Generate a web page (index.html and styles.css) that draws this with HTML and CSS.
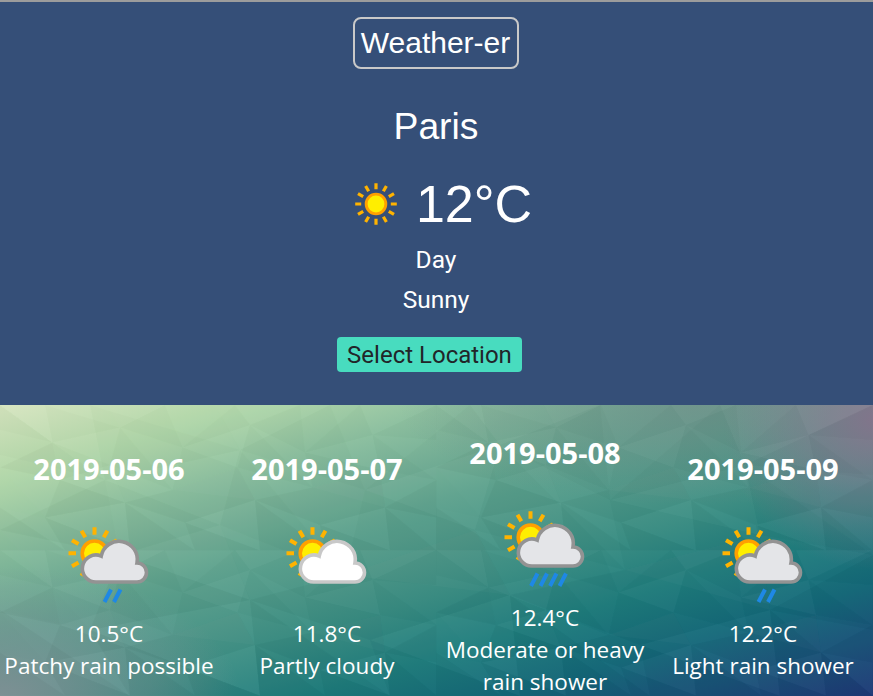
FILE: index.html
```html
<!DOCTYPE html>
<html lang="en">
<head>
<meta charset="utf-8">
<title>Weather-er</title>
<link rel="stylesheet" href="styles.css">
</head>
<body>
<svg class="defs" width="0" height="0" aria-hidden="true">
  <defs>
    <g id="sunrays">
      <path d="M0 -18.5V-26M0 18.5V26M-18.5 0H-26M18.5 0H26M-9.2 -16L-13 -22.5M9.2 -16L13 -22.5M-16 -9.2L-22.5 -13M16 -9.2L22.5 -13M-16 9.2L-22.5 13M16 9.2L22.5 13M-9.2 16L-13 22.500M9.2 16L13 22.500" class="ray"/>
      <circle r="12.3" class="sun-core"/>
    </g>
    <path id="cloud" d="M35 65H76A9.500 9.500 0 0 0 76 46A18.200 18.200 0 0 0 40.200 39.100A13.500 13.500 0 1 0 35 65Z"/>
  </defs>
</svg>
<main class="app">
  <header class="current">
    <h1 class="brand">Weather-er</h1>
    <h2 class="city">Paris</h2>
    <div class="now">
      <svg class="now-icon" viewBox="-40 -40 80 80"><use href="#sunrays"/></svg>
      <span class="now-temp">12°C</span>
    </div>
    <p class="line">Day</p>
    <p class="line">Sunny</p>
    <button class="select">Select Location</button>
  </header>
  <section class="forecast">
    <svg class="mesh" viewBox="0 0 873 291" preserveAspectRatio="none" aria-hidden="true">
      <g id="facets">
        <path class="l2" d="M0 0L90 0L105 75Z M215 0L330 0L240 45Z M470 0L600 0L500 40Z M720 0L873 0L745 60Z M105 75L240 45L220 120Z M365 85L500 40L475 125Z M610 95L745 60L760 130Z M120 150L220 120L250 195Z M345 170L475 125L510 190Z M625 165L760 130L770 205Z M90 225L250 195L260 291Z M370 235L510 190L520 291Z M640 240L770 205L780 291Z"/>
        <path class="l1" d="M90 0L215 0L240 45Z M330 0L470 0L365 85Z M600 0L720 0L610 95Z M0 50L105 75L0 125Z M240 45L365 85L345 170Z M500 40L610 95L625 165Z M745 60L873 70L873 150Z M0 125L120 150L90 225Z M220 120L345 170L250 195Z M475 125L625 165L510 190Z M760 130L873 150L770 205Z M0 205L90 225L130 291Z M250 195L370 235L390 291Z M510 190L640 240L650 291Z M770 205L873 225L873 291Z"/>
        <path class="d1" d="M0 0L105 75L0 50Z M90 0L240 45L105 75Z M330 0L365 85L240 45Z M470 0L500 40L365 85Z M600 0L610 95L500 40Z M720 0L745 60L610 95Z M873 0L873 70L745 60Z M105 75L220 120L120 150Z M240 45L345 170L220 120Z M365 85L475 125L345 170Z M500 40L625 165L475 125Z M610 95L760 130L625 165Z M745 60L873 150L760 130Z"/>
        <path class="d2" d="M0 125L120 150L105 75Z M120 150L90 225L250 195Z M345 170L370 235L250 195Z M475 125L510 190L345 170Z M625 165L640 240L510 190Z M760 130L770 205L625 165Z M873 150L873 225L770 205Z M0 205L130 291L0 291Z M90 225L260 291L130 291Z M250 195L390 291L260 291Z M370 235L520 291L390 291Z M510 190L650 291L520 291Z M640 240L780 291L650 291Z M770 205L873 291L780 291Z M345 170L510 190L370 235Z M625 165L770 205L640 240Z"/>
      </g>
      <use href="#facets" transform="scale(.5)"/>
      <use href="#facets" transform="translate(436 0) scale(.5)"/>
      <use href="#facets" transform="translate(0 145) scale(.5)"/>
      <use href="#facets" transform="translate(436 145) scale(.5)"/>
    </svg>
    <div class="days">
      <article class="day">
        <h3 class="date">2019-05-06</h3>
        <svg class="day-icon" viewBox="0 0 96 96">
          <use href="#sunrays" x="33.500" y="36.300"/>
          <use href="#cloud" class="cloud-grey"/>
          <path class="rain" d="M43.500 85L50 72.500M53 85L59.500 72.500"/>
        </svg>
        <p class="text">10.5°C</p>
        <p class="text">Patchy rain possible</p>
      </article>
      <article class="day">
        <h3 class="date">2019-05-07</h3>
        <svg class="day-icon" viewBox="0 0 96 96">
          <use href="#sunrays" x="33.500" y="36.300"/>
          <use href="#cloud" class="cloud-white"/>
        </svg>
        <p class="text">11.8°C</p>
        <p class="text">Partly cloudy</p>
      </article>
      <article class="day">
        <h3 class="date">2019-05-08</h3>
        <svg class="day-icon" viewBox="0 0 96 96">
          <use href="#sunrays" x="33.500" y="36.300"/>
          <use href="#cloud" class="cloud-grey"/>
          <path class="rain" d="M34 85L40.500 72.500M43.500 85L50 72.500M53 85L59.500 72.500M62.500 85L69 72.500"/>
        </svg>
        <p class="text">12.4°C</p>
        <p class="text">Moderate or heavy rain shower</p>
      </article>
      <article class="day">
        <h3 class="date">2019-05-09</h3>
        <svg class="day-icon" viewBox="0 0 96 96">
          <use href="#sunrays" x="33.500" y="36.300"/>
          <use href="#cloud" class="cloud-grey"/>
          <path class="rain" d="M43.500 85L50 72.500M53 85L59.500 72.500"/>
        </svg>
        <p class="text">12.2°C</p>
        <p class="text">Light rain shower</p>
      </article>
    </div>
  </section>
</main>
</body>
</html>
```

FILE: styles.css
```css
* { box-sizing: border-box; }
html, body { margin: 0; padding: 0; height: 100%; overflow: hidden; }
.defs { position: absolute; }
.ray { stroke: #ffb300; stroke-width: 4; fill: none; }
.sun-core { fill: #ffee00; stroke: #ffa000; stroke-width: 3.6; }
.cloud-grey { fill: #e4e5e8; stroke: #939393; stroke-width: 3.6; }
.cloud-white { fill: #ffffff; stroke: #c8c8c8; stroke-width: 3.6; }
.rain { stroke: #1e88e5; stroke-width: 4; fill: none; }

.app { width: 873px; height: 696px; overflow: hidden; color: #fff; }

.current {
  height: 405px;
  background: #354f78;
  border-top: 2px solid #9c9c9c;
  display: flex;
  flex-direction: column;
  align-items: center;
  font-family: "Liberation Sans", Arial, sans-serif;
  padding: 15px 1px 0 0;
}
.brand {
  margin: 0;
  font-size: 30px;
  font-weight: 400;
  line-height: 48px;
  padding: 0 7px 0 6px;
  border: 2px solid #c9c9c9;
  border-radius: 8px;
  height: 52px;
}
.city {
  margin: 31px 0 0;
  font-size: 37.300px;
  font-weight: 400;
  line-height: 52px;
}
.now {
  margin: 20px 0 0 4px;
  display: flex;
  align-items: center;
  gap: 8px;
  height: 64px;
}
.now-icon { width: 64px; height: 64px; }
.now-temp { font-size: 52px; line-height: 64px; }
.line {
  margin: 8px 0 0;
  font-family: Roboto, sans-serif;
  font-size: 24.500px;
  line-height: 32px;
}
.select {
  margin: 21px 13px 0 0;
  height: 35px;
  width: 185px;
  padding: 1px 0 0;
  border: 0;
  border-radius: 4px;
  background: #48dcbf;
  color: #212529;
  font-family: Roboto, sans-serif;
  font-size: 24px;
  line-height: 34px;
}

.forecast {
  position: relative;
  height: 291px;
  overflow: hidden;
  background:
    radial-gradient(circle 150px at 100% 5%, #85798f 0%, rgba(133,121,143,0) 100%),
    radial-gradient(ellipse 300px 100px at 80% 0%, rgba(110,140,135,.75) 0%, rgba(110,140,135,0) 100%),
    radial-gradient(ellipse 240px 130px at 0% 100%, #84989c 0%, rgba(132,152,156,0) 100%),
    linear-gradient(163deg, #d6e6c0 0%, #b0d6a8 14%, #8cc09e 25%, #5fa28e 41%, #3a8e84 58%, #1f7d7d 69%, #156a7a 80%, #1f3a78 100%);
}
.mesh { position: absolute; left: 0; top: 0; width: 873px; height: 291px; }
.l1 { fill: #fff; fill-opacity: .012; }
.l2 { fill: #fff; fill-opacity: .025; }
.d1 { fill: #000; fill-opacity: .012; }
.d2 { fill: #000; fill-opacity: .025; }

.days {
  position: relative;
  height: 322px;
  display: grid;
  grid-template-columns: repeat(4, 218px);
  align-items: center;
  font-family: "Open Sans", sans-serif;
  text-align: center;
}
.day { padding: 0 2px; }
.date {
  margin: 0;
  font-size: 29px;
  font-weight: 700;
  line-height: 36px;
}
.day-icon { display: block; width: 96px; height: 96px; margin: 30px auto 5px; }
.text {
  margin: 0;
  font-size: 22.500px;
  line-height: 32px;
}
```
